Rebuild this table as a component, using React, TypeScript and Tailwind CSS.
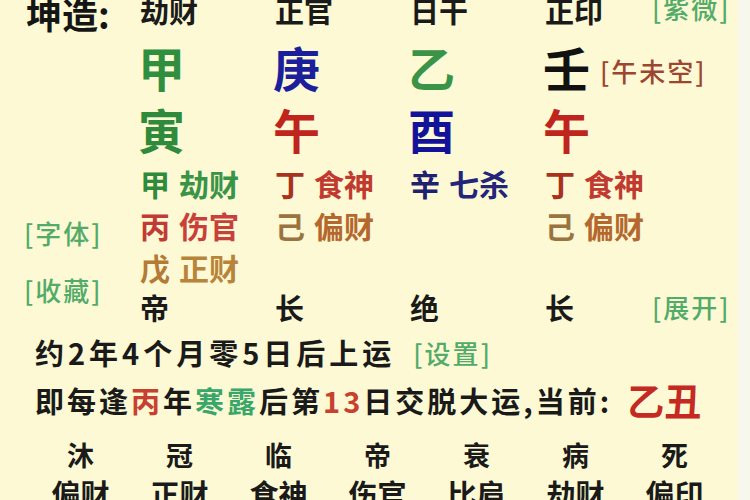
const stems = [
  { top: "劫财", stem: "甲", stemColor: "text-[#2f8f3e]", branch: "寅", branchColor: "text-[#2f8a3c]" },
  { top: "正官", stem: "庚", stemColor: "text-[#1c1f9c]", branch: "午", branchColor: "text-[#c0251d]" },
  { top: "日干", stem: "乙", stemColor: "text-[#3a9448]", branch: "酉", branchColor: "text-[#12139a]" },
  { top: "正印", stem: "壬", stemColor: "text-[#111111]", branch: "午", branchColor: "text-[#c0251d]" },
];

type Hidden = { gan: string; god: string; ganColor: string; godColor: string };

const hidden: Hidden[][] = [
  [
    { gan: "甲", god: "劫财", ganColor: "text-[#2f8a3c]", godColor: "text-[#3a9448]" },
    { gan: "丙", god: "伤官", ganColor: "text-[#c23a34]", godColor: "text-[#c8403a]" },
    { gan: "戊", god: "正财", ganColor: "text-[#b37b35]", godColor: "text-[#b8843a]" },
  ],
  [
    { gan: "丁", god: "食神", ganColor: "text-[#a8321f]", godColor: "text-[#c03a30]" },
    { gan: "己", god: "偏财", ganColor: "text-[#9a7440]", godColor: "text-[#b4682e]" },
  ],
  [{ gan: "辛", god: "七杀", ganColor: "text-[#1e2070]", godColor: "text-[#23257a]" }],
  [
    { gan: "丁", god: "食神", ganColor: "text-[#a8321f]", godColor: "text-[#c03a30]" },
    { gan: "己", god: "偏财", ganColor: "text-[#9a7440]", godColor: "text-[#b4682e]" },
  ],
];

const rowStart = ["row-start-4", "row-start-5", "row-start-6"];
const colStart = ["col-start-2", "col-start-3", "col-start-4", "col-start-5"];

const changsheng = ["沐", "冠", "临", "帝", "衰", "病", "死"];
const shishen = ["偏财", "正财", "食神", "伤官", "比肩", "劫财", "偏印"];

function Tag({ children, className = "" }: { children: React.ReactNode; className?: string }) {
  return (
    <span className={`text-[26px] leading-[30px] tracking-[2px] font-medium text-[#52ab69] whitespace-nowrap ${className}`}>
      [{children}]
    </span>
  );
}

export default function App() {
  return (
    <div className="w-[750px] h-[500px] overflow-hidden flex bg-[#f8f7ee] font-['Noto_Sans_CJK_SC','Noto_Sans',sans-serif]">
      <div className="w-[738px] h-full bg-[#fcf9d4] flex flex-col">
        <div className="-mt-[16px] grid grid-cols-[140px_135px_135px_135px_107px_1fr] grid-rows-[56px_58px_64px_42px_42px_42px_38px]">
          <div className="col-start-1 row-start-1 flex items-center pl-[26px] pt-[1px] text-[36px] leading-none font-bold text-[#151515]">
            坤造:
          </div>
          {stems.map((s, i) => (
            <div key={"t" + i} className={`${colStart[i]} row-start-1 flex items-center pb-[4px] text-[29px] leading-none font-bold text-[#1a1a1a]`}>
              {s.top}
            </div>
          ))}
          <div className="col-start-6 row-start-1 flex items-center pb-[8px]">
            <Tag>紫微</Tag>
          </div>

          {stems.map((s, i) => (
            <div
              key={"s" + i}
              className={`${colStart[i]} row-start-2 ${i === 3 ? "col-span-2" : ""} flex items-center gap-[10px] text-[47px] leading-none font-bold ${s.stemColor}`}
            >
              <span className="-ml-[2px] pb-[5px]">{s.stem}</span>
              {i === 3 && (
                <span className="text-[26px] leading-[30px] tracking-[2px] font-medium text-[#9c4630] pt-[4px]">[午未空]</span>
              )}
            </div>
          ))}

          {stems.map((s, i) => (
            <div key={"b" + i} className={`${colStart[i]} row-start-3 flex items-center -ml-[2px] pb-[4px] text-[47px] leading-none font-bold ${s.branchColor}`}>
              {s.branch}
            </div>
          ))}

          {hidden.map((col, i) =>
            col.map((h, j) => (
              <div key={`h${i}${j}`} className={`${colStart[i]} ${rowStart[j]} flex items-center gap-[9px] text-[30px] leading-[40px] font-bold`}>
                <span className={h.ganColor}>{h.gan}</span>
                <span className={h.godColor}>{h.god}</span>
              </div>
            ))
          )}

          <div className="col-start-1 row-start-4 row-span-4 flex flex-col items-start pl-[24px] pt-[56px] gap-[27px]">
            <Tag>字体</Tag>
            <Tag>收藏</Tag>
          </div>

          {["帝", "长", "绝", "长"].map((c, i) => (
            <div key={"d" + i} className={`${colStart[i]} row-start-7 flex items-center text-[29px] leading-[36px] font-bold text-[#1a1a1a]`}>
              {c}
            </div>
          ))}
          <div className="col-start-6 row-start-7 flex items-center">
            <Tag>展开</Tag>
          </div>
        </div>

        <div className="mt-[5px] h-[48px] flex items-center pl-[35px] text-[29px] tracking-[4px] font-bold text-[#1a1a1a] whitespace-nowrap">
          <span>约2年4个月零5日后上运</span>
          <Tag className="ml-[18px]">设置</Tag>
        </div>

        <div className="h-[52px] flex items-center pl-[35px] text-[29px] tracking-[3px] font-bold text-[#1a1a1a] whitespace-nowrap">
          <span>即每逢</span>
          <span className="text-[#c8402f]">丙</span>
          <span>年</span>
          <span className="text-[#3aa66a]">寒露</span>
          <span>后第</span>
          <span className="text-[#c8402f]">13</span>
          <span>日交脱大运,当前:</span>
          <span className="ml-[15px] text-[37px] tracking-[0px] text-[#c42a22]">乙丑</span>
        </div>

        <div className="h-[46px] flex pl-[31px] text-[27px] font-bold text-[#1a1a1a]">
          {changsheng.map((c, i) => (
            <div key={"c" + i} className="w-[99px] h-full flex items-center justify-center pt-[12px]">
              {c}
            </div>
          ))}
        </div>

        <div className="h-[40px] flex pl-[31px] text-[29px] leading-[40px] font-bold text-[#1a1a1a]">
          {shishen.map((c, i) => (
            <div key={"x" + i} className="w-[99px] text-center">
              {c}
            </div>
          ))}
        </div>
      </div>
    </div>
  );
}
